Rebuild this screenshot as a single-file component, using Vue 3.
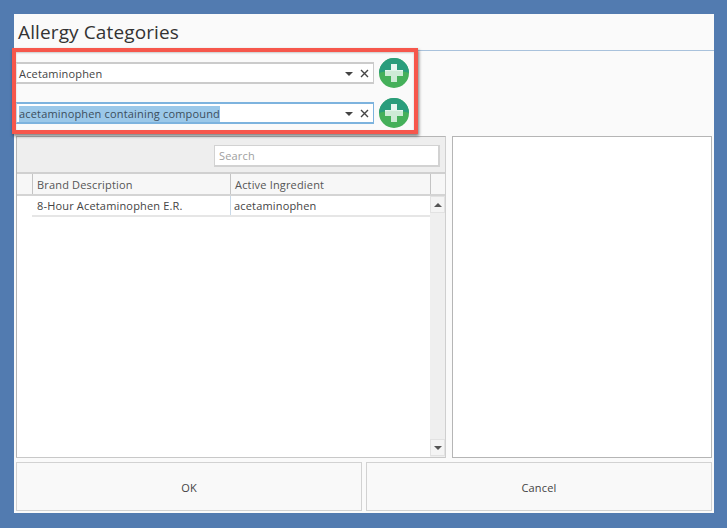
<template>
  <div class="desktop">
    <div class="dialog">
      <header class="title"><h1>Allergy Categories</h1></header>
      <section class="pickers">
        <div v-for="p in pickers" :key="p.text" class="picker">
          <div class="combo" :class="{ focused: p.selected }">
            <span class="combo-text" :class="{ selected: p.selected }">{{ p.text }}</span>
            <span class="caret"></span>
            <svg class="clear" viewBox="0 0 9 9" width="9" height="9">
              <path d="M1 1 L8 8 M8 1 L1 8" stroke="#444" stroke-width="1.4" fill="none" />
            </svg>
          </div>
          <svg class="add" viewBox="0 0 30 30" width="30" height="30">
            <circle cx="15" cy="15" r="15" fill="#45b05a" />
            <path d="M0 15 A15 15 0 0 1 30 15 C22 12 8 12 0 15 Z" fill="#2a9d7c" />
            <path d="M12 6 H18 V12 H24 V18 H18 V24 H12 V18 H6 V12 H12 Z" fill="#cdebd6" />
            <path d="M12 6 H18 V12 H24 V13.2 C18 12.6 12 12.6 6 13.2 V12 H12 Z" fill="#e8f7f1" />
          </svg>
        </div>
        <div class="highlight"></div>
      </section>
      <section class="content">
        <div class="grid">
          <div class="toolbar">
            <div class="search">Search</div>
          </div>
          <div class="head">
            <div class="stub"></div>
            <div class="col c1">Brand Description</div>
            <div class="col c2">Active Ingredient</div>
            <div class="corner"></div>
          </div>
          <div class="body">
            <div class="rows">
              <div class="row">
                <div class="cell c1">8-Hour Acetaminophen E.R.</div>
                <div class="cell c2">acetaminophen</div>
              </div>
            </div>
            <div class="scrollbar">
              <div class="sbtn"><span class="up"></span></div>
              <div class="sbtn"><span class="down"></span></div>
            </div>
          </div>
        </div>
        <div class="detail"></div>
      </section>
      <footer class="actions">
        <button class="btn">OK</button>
        <button class="btn">Cancel</button>
      </footer>
    </div>
  </div>
</template>

<script setup>
const pickers = [
  { text: 'Acetaminophen', selected: false },
  { text: 'acetaminophen containing compound', selected: true }
]
</script>

<style>
html, body { margin: 0; padding: 0; }
</style>

<style scoped>
.desktop {
  width: 727px;
  height: 528px;
  box-sizing: border-box;
  padding: 14px 13px 15px 14px;
  background: #527bb0;
  font-family: "Open Sans", "Noto Sans", sans-serif;
  letter-spacing: 0.17px;
  overflow: hidden;
}
.dialog {
  height: 499px;
  background: #fafafa;
  display: flex;
  flex-direction: column;
  position: relative;
}
.title {
  height: 37px;
  box-sizing: border-box;
  border-bottom: 1px solid #a9c2dc;
  padding-left: 4px;
}
h1 {
  margin: 0;
  font-size: 19px;
  font-weight: 400;
  line-height: 37px;
  color: #333;
  letter-spacing: 0.12px;
}
.pickers {
  height: 84px;
  padding: 12px 0 0 2px;
  box-sizing: border-box;
  display: flex;
  flex-direction: column;
  gap: 20px;
}
.picker {
  display: flex;
  align-items: center;
  gap: 5px;
  height: 20px;
}
.combo {
  width: 358px;
  height: 22px;
  box-sizing: border-box;
  border: 1px solid #cbcbcb;
  border-width: 2px 1px 2px 1px;
  border-left-color: #eee;
  background: #fff;
  display: flex;
  align-items: center;
  padding: 1px 4px 0 2px;
  font-size: 11px;
  color: #444;
}
.combo.focused {
  border-color: #7db3de;
  border-left-color: #cfe1f0;
}
.combo-text {
  flex: 1;
}
.selected {
  flex: none;
  background: #9bc8e9;
  color: #3c4e5c;
  line-height: 16px;
  margin-right: auto;
}
.caret {
  width: 0;
  height: 0;
  border-left: 4px solid transparent;
  border-right: 4px solid transparent;
  border-top: 4px solid #444;
  margin-right: 7px;
}
.clear { flex: none; }
.add { flex: none; }
.highlight {
  position: absolute;
  left: -2px;
  top: 34px;
  width: 406px;
  height: 86px;
  box-sizing: border-box;
  border: 4px solid #f6574c;
  box-shadow: 1px 2px 3px rgba(0, 0, 0, 0.5), inset 0 1px 2px rgba(0, 0, 0, 0.2);
  pointer-events: none;
}
.content {
  display: flex;
  gap: 6px;
  padding: 1px 2px 0 2px;
  height: 322px;
}
.grid {
  width: 430px;
  height: 322px;
  box-sizing: border-box;
  border: 1px solid #b5b5b5;
  border-bottom-color: #c8c8c8;
  border-right-color: #cfcfcf;
  background: #fff;
  display: flex;
  flex-direction: column;
}
.toolbar {
  height: 37px;
  flex: none;
  box-sizing: border-box;
  background: #eee;
  display: flex;
  justify-content: flex-end;
  align-items: flex-start;
  padding: 8px 5px 0 0;
  border-bottom: 2px solid #d0d0d0;
}
.search {
  width: 226px;
  height: 22px;
  box-sizing: border-box;
  border: 2px solid #d2d2d2;
  border-width: 1px 2px 2px 1px;
  background: #fff;
  font-size: 11px;
  line-height: 19px;
  color: #a0a0a0;
  padding-left: 4px;
}
.head {
  display: flex;
  height: 22px;
  flex: none;
  box-sizing: border-box;
  background: #f7f7f7;
  border-bottom: 2px solid #d4d4d4;
  font-size: 11px;
  color: #555;
}
.stub {
  width: 15px;
  flex: none;
}
.col {
  border-left: 1px solid #c4c4c4;
  box-sizing: border-box;
  padding-left: 4px;
  line-height: 22px;
}
.c1 { width: 198px; flex: none; }
.c2 { width: 200px; flex: none; }
.corner {
  flex: 1;
  border-left: 1px solid #c4c4c4;
}
.body {
  flex: 1;
  display: flex;
  min-height: 0;
}
.rows {
  width: 413px;
  padding-left: 15px;
  box-sizing: border-box;
  flex: none;
}
.row {
  display: flex;
  height: 21px;
  box-sizing: border-box;
  border-bottom: 2px solid #e6e6e6;
  font-size: 11px;
  color: #444;
}
.cell {
  box-sizing: border-box;
  padding-left: 5px;
  line-height: 20px;
}
.cell.c2 {
  padding-left: 3px;
  border-left: 1px solid #c9d9e8;
}
.scrollbar {
  flex: 1;
  background: #efefef;
  display: flex;
  flex-direction: column;
  justify-content: space-between;
  align-items: center;
  padding: 0 0 1px;
}
.sbtn {
  width: 15px;
  height: 17px;
  box-sizing: border-box;
  background: #f4f4f4;
  border: 1px solid #e2e2e2;
  display: flex;
  align-items: center;
  justify-content: center;
}
.up, .down {
  width: 0;
  height: 0;
  border-left: 4px solid transparent;
  border-right: 4px solid transparent;
}
.up { border-bottom: 4px solid #555; }
.down { border-top: 4px solid #555; }
.detail {
  width: 260px;
  height: 322px;
  box-sizing: border-box;
  border: 1px solid #b5b5b5;
  background: #fff;
}
.actions {
  display: flex;
  gap: 4px;
  padding: 4px 2px 0 2px;
}
.btn {
  flex: 1;
  height: 49px;
  box-sizing: border-box;
  border: 1px solid #d2d2d2;
  background: #f9f9f9;
  font-family: inherit;
  font-size: 11px;
  letter-spacing: 0.17px;
  color: #444;
  padding: 2px 0 0;
}
</style>
